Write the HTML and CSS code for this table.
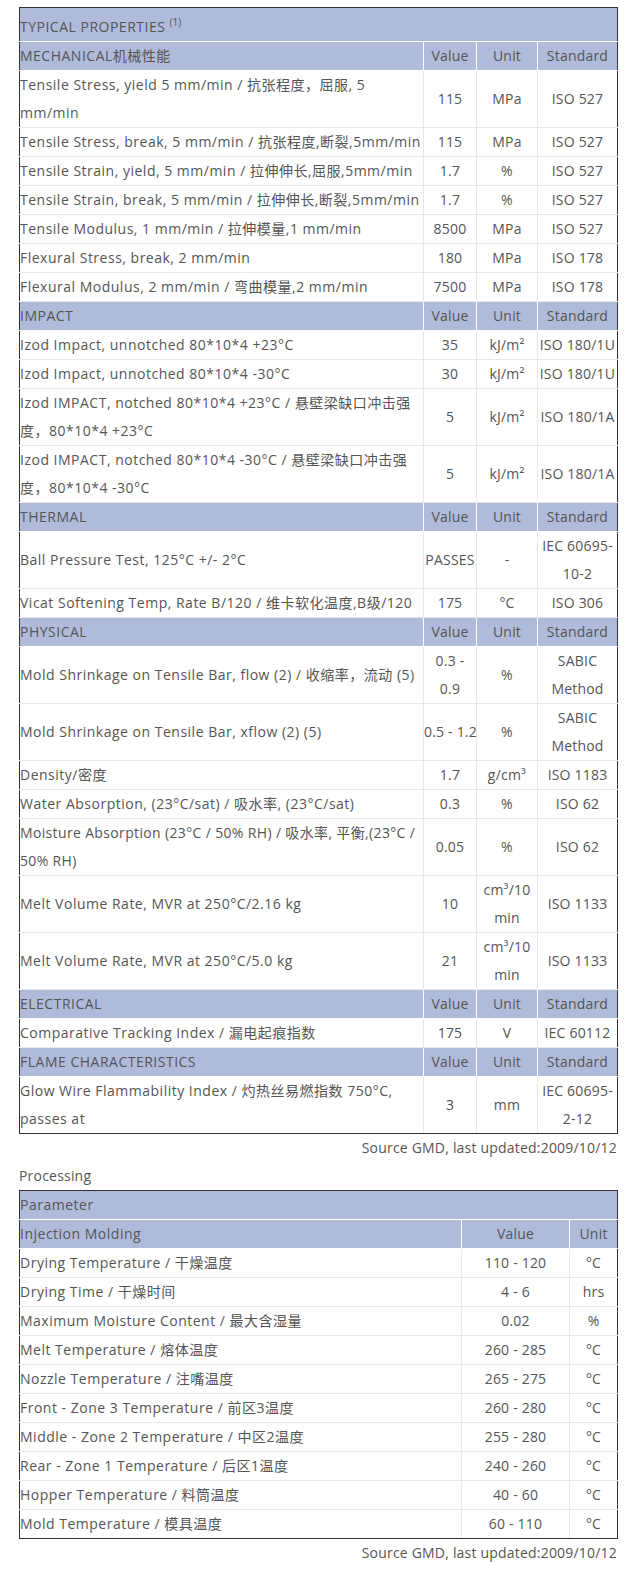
FILE: index.html
```html
<!DOCTYPE html>
<html lang="zh">
<head>
<meta charset="utf-8">
<title>Typical Properties</title>
<link rel="stylesheet" href="styles.css">
</head>
<body>
<div class="page">
  <table class="props">
    <colgroup><col class="c-name"><col class="c-val"><col class="c-unit"><col class="c-std"></colgroup>
    <tr class="title"><td colspan="4">TYPICAL PROPERTIES <sup>(1)</sup></td></tr>
    <tr class="head"><td>MECHANICAL机械性能</td><td>Value</td><td>Unit</td><td>Standard</td></tr>
    <tr><td>Tensile Stress, yield 5 mm/min / 抗张程度，屈服, 5 mm/min</td><td>115</td><td>MPa</td><td>ISO 527</td></tr>
    <tr><td>Tensile Stress, break, 5 mm/min / 抗张程度,断裂,5mm/min</td><td>115</td><td>MPa</td><td>ISO 527</td></tr>
    <tr><td>Tensile Strain, yield, 5 mm/min / 拉伸伸长,屈服,5mm/min</td><td>1.7</td><td>%</td><td>ISO 527</td></tr>
    <tr><td>Tensile Strain, break, 5 mm/min / 拉伸伸长,断裂,5mm/min</td><td>1.7</td><td>%</td><td>ISO 527</td></tr>
    <tr><td>Tensile Modulus, 1 mm/min / 拉伸模量,1 mm/min</td><td>8500</td><td>MPa</td><td>ISO 527</td></tr>
    <tr><td>Flexural Stress, break, 2 mm/min</td><td>180</td><td>MPa</td><td>ISO 178</td></tr>
    <tr><td>Flexural Modulus, 2 mm/min / 弯曲模量,2 mm/min</td><td>7500</td><td>MPa</td><td>ISO 178</td></tr>
    <tr class="head"><td>IMPACT</td><td>Value</td><td>Unit</td><td>Standard</td></tr>
    <tr><td>Izod Impact, unnotched 80*10*4 +23°C</td><td>35</td><td>kJ/m²</td><td>ISO 180/1U</td></tr>
    <tr><td>Izod Impact, unnotched 80*10*4 -30°C</td><td>30</td><td>kJ/m²</td><td>ISO 180/1U</td></tr>
    <tr><td>Izod IMPACT, notched 80*10*4 +23°C / 悬壁梁缺口冲击强度，80*10*4 +23°C</td><td>5</td><td>kJ/m²</td><td>ISO 180/1A</td></tr>
    <tr><td>Izod IMPACT, notched 80*10*4 -30°C / 悬壁梁缺口冲击强度，80*10*4 -30°C</td><td>5</td><td>kJ/m²</td><td>ISO 180/1A</td></tr>
    <tr class="head"><td>THERMAL</td><td>Value</td><td>Unit</td><td>Standard</td></tr>
    <tr><td>Ball Pressure Test, 125°C +/- 2°C</td><td>PASSES</td><td>-</td><td>IEC 60695-10-2</td></tr>
    <tr><td>Vicat Softening Temp, Rate B/120 / 维卡软化温度,B级/120</td><td>175</td><td>°C</td><td>ISO 306</td></tr>
    <tr class="head"><td>PHYSICAL</td><td>Value</td><td>Unit</td><td>Standard</td></tr>
    <tr><td>Mold Shrinkage on Tensile Bar, flow (2) / 收缩率，流动 (5)</td><td>0.3 - 0.9</td><td>%</td><td>SABIC Method</td></tr>
    <tr><td>Mold Shrinkage on Tensile Bar, xflow (2) (5)</td><td><span class="nowrap">0.5 - 1.2</span></td><td>%</td><td>SABIC Method</td></tr>
    <tr><td>Density/密度</td><td>1.7</td><td>g/cm³</td><td>ISO 1183</td></tr>
    <tr><td>Water Absorption, (23°C/sat) / 吸水率, (23°C/sat)</td><td>0.3</td><td>%</td><td>ISO 62</td></tr>
    <tr><td class="tight">Moisture Absorption (23°C / 50% RH) / 吸水率, 平衡,(23°C / 50% RH)</td><td>0.05</td><td>%</td><td>ISO 62</td></tr>
    <tr><td>Melt Volume Rate, MVR at 250°C/2.16 kg</td><td>10</td><td>cm³/10 min</td><td>ISO 1133</td></tr>
    <tr><td>Melt Volume Rate, MVR at 250°C/5.0 kg</td><td>21</td><td>cm³/10 min</td><td>ISO 1133</td></tr>
    <tr class="head"><td>ELECTRICAL</td><td>Value</td><td>Unit</td><td>Standard</td></tr>
    <tr><td>Comparative Tracking Index / 漏电起痕指数</td><td>175</td><td>V</td><td>IEC 60112</td></tr>
    <tr class="head"><td>FLAME CHARACTERISTICS</td><td>Value</td><td>Unit</td><td>Standard</td></tr>
    <tr><td>Glow Wire Flammability Index / 灼热丝易燃指数 750°C, passes at</td><td>3</td><td>mm</td><td>IEC 60695-2-12</td></tr>
  </table>
  <p class="source">Source GMD, last updated:2009/10/12</p>
  <p class="section">Processing</p>
  <table class="props proc">
    <colgroup><col class="p-name"><col class="p-val"><col class="p-unit"></colgroup>
    <tr class="head title2"><td colspan="3">Parameter</td></tr>
    <tr class="head"><td>Injection Molding</td><td>Value</td><td>Unit</td></tr>
    <tr><td>Drying Temperature / 干燥温度</td><td>110 - 120</td><td>°C</td></tr>
    <tr><td>Drying Time / 干燥时间</td><td>4 - 6</td><td>hrs</td></tr>
    <tr><td>Maximum Moisture Content / 最大含湿量</td><td>0.02</td><td>%</td></tr>
    <tr><td>Melt Temperature / 熔体温度</td><td>260 - 285</td><td>°C</td></tr>
    <tr><td>Nozzle Temperature / 注嘴温度</td><td>265 - 275</td><td>°C</td></tr>
    <tr><td>Front - Zone 3 Temperature / 前区3温度</td><td>260 - 280</td><td>°C</td></tr>
    <tr><td>Middle - Zone 2 Temperature / 中区2温度</td><td>255 - 280</td><td>°C</td></tr>
    <tr><td>Rear - Zone 1 Temperature / 后区1温度</td><td>240 - 260</td><td>°C</td></tr>
    <tr><td>Hopper Temperature / 料筒温度</td><td>40 - 60</td><td>°C</td></tr>
    <tr><td>Mold Temperature / 模具温度</td><td>60 - 110</td><td>°C</td></tr>
  </table>
  <p class="source">Source GMD, last updated:2009/10/12</p>
</div>
</body>
</html>
```
FILE: styles.css
```css
html, body {
  margin: 0;
  padding: 0;
  background: #fff;
}
body {
  font-family: "Open Sans", "Noto Sans CJK SC", sans-serif;
  font-size: 14px;
  line-height: 28px;
  color: #555;
}
.page {
  padding: 7px 10px 0 19px;
}
.props {
  width: 598px;
  table-layout: fixed;
  border-collapse: collapse;
  border: 1px solid #333;
}
.props td {
  padding: 0;
  border: 1px solid #e8e8e8;
  text-align: center;
  vertical-align: middle;
  line-height: 28px;
  letter-spacing: 0.2px;
  overflow-wrap: break-word;
}
.props td:first-child {
  text-align: left;
  letter-spacing: 0.5px;
}
.props td.tight {
  letter-spacing: 0.35px;
}
.nowrap { white-space: nowrap; }
.c-name { width: 404px; }
.c-val { width: 53px; }
.c-unit { width: 61px; }
.c-std { width: 80px; }
.p-name { width: 442px; }
.p-val { width: 108px; }
.p-unit { width: 48px; }
.props .head td,
.props .title td {
  background: #b0bbdb;
  border-color: #fff;
}
.props .title td {
  height: 33px;
  padding-top: 5px;
  box-sizing: border-box;
  text-align: left;
  vertical-align: top;
}
.props .title sup {
  font-size: 10px;
  line-height: 0;
  vertical-align: 6px;
  letter-spacing: 0;
}
.props tr:first-child td {
  border-top-color: #333;
}
.props td:first-child { border-left-color: #333; }
.props td:last-child { border-right-color: #333; }
.props tr:last-child td { border-bottom-color: #333; }
.source {
  margin: 0;
  text-align: right;
  line-height: 28px;
  letter-spacing: 0.2px;
}
.section {
  margin: 0;
  line-height: 28px;
  letter-spacing: 0.2px;
}
```
